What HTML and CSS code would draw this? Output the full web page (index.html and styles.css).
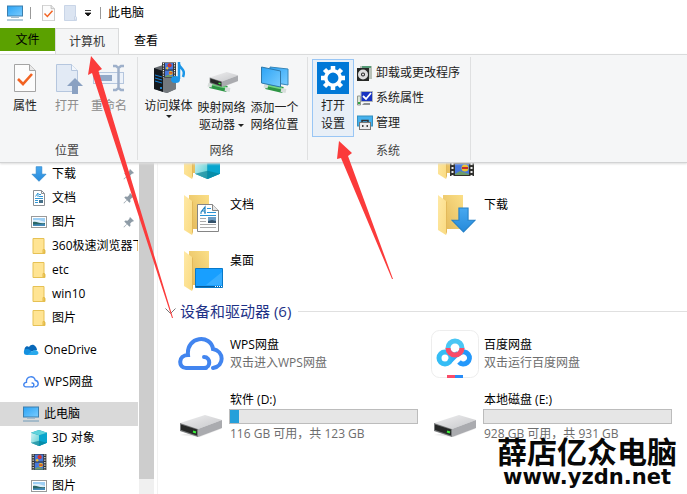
FILE: index.html
```html
<!DOCTYPE html>
<html lang="zh-CN">
<head>
<meta charset="utf-8">
<title>此电脑</title>
<link rel="stylesheet" href="styles.css">
</head>
<body>
<svg class="defs" aria-hidden="true">
  <defs>
    <linearGradient id="g-screen" x1="0" y1="0" x2="1" y2="1"><stop offset="0" stop-color="#2ba3f5"/><stop offset="1" stop-color="#79ccff"/></linearGradient>
    <linearGradient id="g-back" x1="0" y1="1" x2="1" y2="0"><stop offset="0" stop-color="#e3b95a"/><stop offset="1" stop-color="#fbdf87"/></linearGradient>
    <linearGradient id="g-front" x1="0" y1="0" x2="1" y2="1"><stop offset="0" stop-color="#ffe9a6"/><stop offset="1" stop-color="#fadb82"/></linearGradient>
    <linearGradient id="g-down" x1="0" y1="0" x2="0" y2="1"><stop offset="0" stop-color="#47a8f0"/><stop offset="1" stop-color="#268ada"/></linearGradient>
    <linearGradient id="g-metal" x1="0" y1="0" x2="1" y2="1"><stop offset="0" stop-color="#efeff0"/><stop offset="1" stop-color="#c6c7ca"/></linearGradient>
    <linearGradient id="g-cube" x1="0" y1="0" x2="1" y2="1"><stop offset="0" stop-color="#d3f3f4"/><stop offset="1" stop-color="#54ccd2"/></linearGradient>
    <linearGradient id="g-pan" x1="0" y1="0" x2="1" y2="0"><stop offset="0" stop-color="#35bdf5"/><stop offset="1" stop-color="#2398fb"/></linearGradient>
  </defs>
  <symbol id="pc" viewBox="0 0 16 16">
    <rect x=".5" y="1" width="15" height="10" fill="url(#g-screen)" stroke="#3c7fae"/>
    <path d="M4 12.5h8" stroke="#a5bccd"/><path d="M0 15h16" stroke="#6e9ab8"/>
  </symbol>
  <symbol id="check-page" viewBox="0 0 22 28">
    <path d="M.5.5h15l6 6v21H.5z" fill="#fcfcfc" stroke="#a4a4a4"/><path d="M15.500.5v6h6" fill="#e8e8e8" stroke="#a4a4a4"/>
    <path d="M4 15l5 5 9-10" fill="none" stroke="#f26322" stroke-width="2.600"/>
  </symbol>
  <symbol id="folder-s" viewBox="0 0 13 16">
    <path d="M.5.5h11v11l1 1v3H.5z" fill="#ffe493" stroke="#e6c154"/><path d="M10.500 15v-3.500h1.500V15z" fill="#f6d365" stroke="#e3ba49"/>
  </symbol>
  <symbol id="down" viewBox="0 0 16 17">
    <path d="M5 .7h6v8h4.500L8 16.300.5 8.700H5z" fill="url(#g-down)" stroke="#2480c8" stroke-width=".7"/>
  </symbol>
  <symbol id="doc" viewBox="0 0 22 28">
    <path d="M.5.5h15l6 6v21H.5z" fill="#fff" stroke="#858585"/><path d="M15.500.5v6h6" fill="#e6e6e6" stroke="#858585"/>
    <path d="M3 9h2M7 9h2M4 8l4-5v6M5 7h3" fill="none" stroke="#2080be" stroke-width="1.200"/>
    <path d="M10 4.500h4M10 8.500h9M3 11.500h16" stroke="#2a94d6"/><path d="M3 14.500h6M3 17.500h6M3 20.500h16M3 23.500h16" stroke="#aaa"/>
    <path d="M11 13h8v6h-8z" fill="#6d9cc3"/><path d="M11 17l4-1 4 1v2h-8z" fill="#34516a"/>
  </symbol>
  <symbol id="doc-s" viewBox="0 0 12 16">
    <path d="M.5.5h8l3 3v12H.5z" fill="#fff" stroke="#8b8f94"/><path d="M8.500.5v3h3" fill="none" stroke="#8b8f94"/>
    <path d="M2.500 6.500L5 3v4M6 4.500h2M2 8.500h8M6 6.500h4" fill="none" stroke="#3297d4"/><path d="M2 10.500h3M2 12.500h3" stroke="#3297d4"/><path d="M6 10h4v3H6z" fill="#456f88"/>
  </symbol>
  <symbol id="pic" viewBox="0 0 16 12">
    <rect x=".5" y=".5" width="15" height="11" fill="#fff" stroke="#9a9a9a"/><path d="M2 2h12v8H2z" fill="#9ecff4"/>
    <path d="M2 4h6l6 2v1H2z" fill="#deeffb"/><path d="M2 6c4-1 6 2 12 1v3H2z" fill="#2b6766"/><path d="M2 8.500l12-.5v2H2z" fill="#4289b8"/>
  </symbol>
  <symbol id="film" viewBox="0 0 24 26">
    <path d="M0 0h24v26H0z" fill="#30302d"/><path d="M5 1h14v11H5zM5 14h14v11H5z" fill="#4678dd"/>
    <path d="M2.500 1v25M21.500 1v25" stroke="#eee" stroke-width="2" stroke-dasharray="2 2"/>
    <circle cx="13" cy="5" r="3.500" fill="#d3342b"/><circle cx="9" cy="10" r="2" fill="#f2c230"/><circle cx="15" cy="18" r="3.500" fill="#ecc12d"/><path d="M12 18h6" stroke="#c52d29" stroke-width="2"/><path d="M5 24l5-3 9 3v1H5z" fill="#6f9c69"/>
  </symbol>
  <symbol id="cube" viewBox="0 0 24 24">
    <path d="M12 0l12 4v15l-12 5L0 19V4z" fill="#0d8fa8"/><path d="M0 4l12 4v16L0 19z" fill="url(#g-cube)"/><path d="M12 8l12-4v15l-12 5z" fill="#08a5ce"/><path d="M0 4l12-4 12 4-12 4z" fill="#5ed3dc"/><path d="M12 16l12 3-12 5-12-5z" fill="#087f95" opacity=".65"/>
  </symbol>
  <symbol id="pin" viewBox="0 0 12 12">
    <path d="M7 1l4 4-1.500.7-.3-.2-2 2 .3 2.200-1 1L4 8.300 1 11.500.5 11l3.200-3L1.300 5.500l1-1 2.200.3 2-2-.2-.3z" fill="#8e9ba6"/>
  </symbol>
  <symbol id="folder" viewBox="0 0 40 42">
    <path d="M5 1h20v34H5z" fill="url(#g-back)"/><path d="M0 1l8 6v34l-8-5z" fill="url(#g-front)"/><path d="M8 7l1 1v30l-1 3z" fill="#e3b95a"/>
  </symbol>
  <symbol id="wps" viewBox="0 0 46 34">
    <path d="M28 31H8c-8 0-8-13 2-13C8-1 33-3 35 12c11 2 12 17 0 19" fill="none" stroke="#4285ef" stroke-width="4" stroke-linecap="round"/>
    <path d="M26 31c7 0 7-11 0-11" fill="none" stroke="#4285ef" stroke-width="4" stroke-linecap="round"/>
  </symbol>
  <symbol id="drive" viewBox="0 0 44 24">
    <path d="M1 21l20 2 21-8 1-2z" fill="#000" opacity=".08"/><path d="M1 9l25-8 17 5-24 9z" fill="url(#g-metal)"/><path d="M19 15l24-9v8l-24 9z" fill="#aaabaf"/><path d="M1 9l18 6v8L1 17z" fill="#77797b"/><path d="M2 10.500l16 5v6L2 16z" fill="#262827"/><path d="M14 17.500l3 1" stroke="#3bf23b" stroke-width="2"/>
  </symbol>
  <symbol id="network-base" viewBox="0 0 24 9">
    <path d="M3 2l17 4" stroke="#2d9544" stroke-width="6"/><path d="M5 1.500l14 3" stroke="#74d682" stroke-width="2"/><path d="M1 1.500l4 1M18 6l5 1" stroke="#d7dedb" stroke-width="4"/>
  </symbol>
</svg>

<header class="titlebar">
  <svg class="i16"><use href="#pc"/></svg>
  <span class="bar"></span>
  <svg class="quick-page"><use href="#check-page"/></svg>
  <svg class="quick-folder" viewBox="0 0 13 16"><path d="M.5.5h11v11l1 1v3H.5z" fill="#dce5f2" stroke="#c9d5e7"/><path d="M10.500 15v-3.500h1.500V15z" fill="#fff" stroke="#c9d5e7"/></svg>
  <svg class="quick-more" viewBox="0 0 8 8"><path d="M1 1.500h6M1 4h6L4 7z" stroke="#111" stroke-width=".8" fill="#111"/></svg>
  <span class="bar"></span>
  <h1>此电脑</h1>
</header>

<nav class="tabs">
  <button class="tab file">文件</button>
  <button class="tab active">计算机</button>
  <button class="tab">查看</button>
</nav>

<section class="ribbon">
  <div class="group place">
    <div class="tools">
      <button class="tool"><svg class="i32" viewBox="0 0 32 32"><use href="#check-page" x="5" y="2" width="22" height="28"/></svg><span>属性</span></button>
      <button class="tool off"><svg class="i32" viewBox="0 0 32 32"><path d="M5.500 2.500h15l6 6v21h-21z" fill="#e2eaf5" stroke="#b5c6de"/><path d="M20.500 2.500v6h6" fill="#f3f7fc" stroke="#b5c6de"/><path d="M24 16l8 8h-5v8h-6v-8h-5z" fill="#8aa1c2"/></svg><span>打开</span></button>
      <button class="tool off"><svg class="i32" viewBox="0 0 32 32"><rect x=".5" y="10.500" width="30" height="11" fill="#edf2f9" stroke="#b5c6de"/><path d="M6 13h13v6H6z" fill="#93a9c8"/><path d="M20 4h3l2.500 2L28 4h3M25.500 6v20M20 28h3l2.500-2 2.500 2h3" fill="none" stroke="#9eb0ca" stroke-width="2.500"/></svg><span>重命名</span></button>
    </div>
    <h2>位置</h2>
  </div>
  <div class="group network">
    <div class="tools">
      <button class="tool"><svg class="i32" viewBox="0 0 32 32">
        <path d="M1 6l9-3 13 3v21l-9 4-13-4z" fill="#666b70"/><path d="M1 6l9 3v21l-9-3z" fill="#14191e"/><path d="M2 13l7 2M2 16l7 2M2 19l7 2" stroke="#1681d8"/><path d="M10 9l13-3v21l-9 4-4-1z" fill="#74797e"/><circle cx="8" cy="26" r="1" fill="#26a5ff"/>
        <use href="#film" x="9" y="0" width="14" height="16"/>
        <path d="M26 0v17M26 2c1 5 7 5 4 13" fill="none" stroke="#1b96e8" stroke-width="2.500"/><ellipse cx="22.500" cy="17.500" rx="4.500" ry="3.500" fill="#1b96e8"/></svg><span>访问媒体</span><i class="caret"></i></button>
      <button class="tool low"><svg class="i32" viewBox="0 0 32 32"><use href="#network-base" x="1" y="21" width="24" height="9"/><use href="#drive" x="3" y="9" width="30" height="17"/></svg><span>映射网络<br>驱动器 <i class="caret"></i></span></button>
      <button class="tool low"><svg class="i32" viewBox="0 0 32 32"><use href="#network-base" x="4" y="22" width="24" height="9"/><path d="M11 5l18 2v16l-18-3z" fill="url(#g-screen)" stroke="#3686b9"/><path d="M2.500 5l19 4v16l-19-4z" fill="url(#g-screen)" stroke="#2f79aa"/></svg><span>添加一个<br>网络位置</span></button>
    </div>
    <h2>网络</h2>
  </div>
  <div class="group system">
    <div class="tools">
      <button class="tool settings"><svg class="i32" viewBox="0 0 32 32"><path d="M0 0h32v32H0z" fill="#0078d7"/><g stroke="#fff" stroke-width="4.500"><path d="M16 4v24M4 16h24M7.500 7.500l17 17M24.500 7.500l-17 17"/></g><circle cx="16" cy="16" r="7.200" fill="#0078d7" stroke="#fff" stroke-width="3.500"/></svg><span>打开<br>设置</span></button>
      <div class="list">
        <button><svg class="i16" viewBox="0 0 16 16"><path d="M3 1h12v13H3z" fill="#b9c2b9"/><path d="M5 2h9" stroke="#569b77" stroke-width="2"/><path d="M0 3h12v13H0z" fill="#262826"/><circle cx="6" cy="9.500" r="5" fill="#ddd"/><circle cx="6" cy="9.500" r="2" fill="#222"/><circle cx="6" cy="9.500" r="1" fill="#eee"/></svg>卸载或更改程序</button>
        <button><svg class="i16" viewBox="0 0 16 16"><path d="M.5 6h3v9h-3z" fill="#dce6da" stroke="#909790"/><path d="M1 13h2" stroke="#32a644" stroke-width="2"/><path d="M4 1.500h11.500v10H4z" fill="#1933c2" stroke="#afb4b8"/><path d="M6 6l3 3 5-6" fill="none" stroke="#fff" stroke-width="1.800"/><path d="M7 13h6v2H5z" fill="#8b8f92"/></svg>系统属性</button>
        <button><svg class="i16" viewBox="0 0 16 16"><rect x=".5" y="1" width="15" height="10" fill="#45b1ed" stroke="#338fc0"/><path d="M5 7V5.500h6V7" fill="none" stroke="#333" stroke-width="1.500"/><rect x="2.500" y="7.500" width="11" height="7" fill="#eee" stroke="#777"/><path d="M5 10h1.500v2H5zM9.500 10H11v2H9.500z" fill="#444"/></svg>管理</button>
      </div>
    </div>
    <h2>系统</h2>
  </div>
</section>

<main class="body">
  <aside class="tree">
    <ul>
      <li><svg class="i16"><use href="#down"/></svg>下载<svg class="pin"><use href="#pin"/></svg></li>
      <li><svg class="i16"><use href="#doc-s"/></svg>文档<svg class="pin"><use href="#pin"/></svg></li>
      <li><svg class="i16"><use href="#pic"/></svg>图片<svg class="pin"><use href="#pin"/></svg></li>
      <li><svg class="i16"><use href="#folder-s"/></svg>360极速浏览器下</li>
      <li><svg class="i16"><use href="#folder-s"/></svg>etc</li>
      <li><svg class="i16"><use href="#folder-s"/></svg>win10</li>
      <li><svg class="i16"><use href="#folder-s"/></svg>图片</li>
      <li class="root"><svg class="i16" viewBox="0 0 16 16"><path d="M2 11C0 5 4 3 6 5c3-5 8-1 8 3z" fill="#0868b9"/><path d="M1 11c-1-4 4-5 6-3l5 5H4c-2 0-3-1-3-2z" fill="#1490df"/><path d="M4 13l7-5c5 0 6 5 2 5z" fill="#29a9ec"/></svg>OneDrive</li>
      <li class="root"><svg class="i16"><use href="#wps"/></svg>WPS网盘</li>
      <li class="root selected"><svg class="i16"><use href="#pc"/></svg>此电脑</li>
      <li><svg class="i16"><use href="#cube"/></svg>3D 对象</li>
      <li><svg class="i16"><use href="#film"/></svg>视频</li>
      <li><svg class="i16"><use href="#pic"/></svg>图片</li>
    </ul>
  </aside>
  <div class="scroll"><div class="thumb"></div></div>
  <section class="content">
    <div class="grid folders">
      <article class="folder"><svg class="fi" viewBox="0 0 40 42"><use href="#folder" width="40" height="42"/><use href="#cube" x="11" y="16" width="25" height="25"/></svg></article>
      <article class="folder"><svg class="fi" viewBox="0 0 40 42"><use href="#folder" width="40" height="42"/><use href="#film" x="12" y="12" width="24" height="26"/></svg></article>
      <article class="folder"><svg class="fi" viewBox="0 0 40 42"><use href="#folder" width="40" height="42"/><use href="#doc" x="13" y="10" width="22" height="28"/></svg><span>文档</span></article>
      <article class="folder"><svg class="fi" viewBox="0 0 40 42"><use href="#folder" width="40" height="42"/><use href="#down" x="13" y="13" width="25" height="26"/></svg><span>下载</span></article>
      <article class="folder"><svg class="fi" viewBox="0 0 40 42"><use href="#folder" width="40" height="42"/><path d="M11.500 18.500h27v19h-27z" fill="#189fff" stroke="#0879c9"/><path d="M38 22v13H22z" fill="#4cb7ff" opacity=".6"/><path d="M12 36.500h26" stroke="#075c9b"/><path d="M31 36.500h7" stroke="#fff" stroke-dasharray="1 1"/></svg><span>桌面</span></article>
    </div>
    <h2 class="section"><svg class="chev" viewBox="0 0 11 7"><path d="M.5.5l5 5 5-5" fill="none" stroke="#777"/></svg><span>设备和驱动器 (6)</span></h2>
    <div class="grid drives">
      <article class="item"><svg class="di wpsicon"><use href="#wps"/></svg><div><h3>WPS网盘</h3><p>双击进入WPS网盘</p></div></article>
      <article class="item"><svg class="di" viewBox="0 0 48 48"><rect x=".5" y=".5" width="47" height="47" rx="8" fill="#fff" stroke="#ededed"/><g fill="none" stroke-width="5"><circle cx="14" cy="28" r="6" stroke="#35bdf5"/><path d="M28 32a6 6 0 1 0 1-9" stroke="#2398fb"/><path d="M18 32l9-9" stroke="url(#g-pan)"/><circle cx="24" cy="18" r="7" stroke="#4ac6f4"/><path d="M17 18a7 7 0 0 0 14 0" stroke="#fa4b68"/></g><path d="M16 45h8v3h-8z" fill="#fa4b68"/><path d="M24 45h8v3h-8z" fill="#288cf7"/></svg><div><h3>百度网盘</h3><p>双击运行百度网盘</p></div></article>
      <article class="item disk"><svg class="di diskicon"><use href="#drive"/></svg><div><h3 id="d">软件 (D:)</h3><div class="usage" role="img" aria-labelledby="d"><i class="used"></i></div><p>116 GB 可用，共 123 GB</p></div></article>
      <article class="item disk"><svg class="di diskicon"><use href="#drive"/></svg><div><h3 id="e">本地磁盘 (E:)</h3><div class="usage" role="img" aria-labelledby="e"></div><p>928 GB 可用，共 931 GB</p></div></article>
    </div>
  </section>
</main>

<svg class="arrows" viewBox="0 0 687 494" aria-hidden="true">
  <path d="M91 56l11 13-3.500 2L173 318h-1L92 73l-4 2z" fill="#fb3b3b"/>
  <path d="M339 141l13 12-4 3 45 123h-1l-51-121-4 1z" fill="#fb3b3b"/>
</svg>
<div class="mark"><strong>薛店亿众电脑</strong><span>www.yzdn.net</span></div>
</body>
</html>
```
FILE: styles.css
```css
* { box-sizing: border-box; margin: 0; padding: 0; }
body {
  display: flex; flex-direction: column; height: 100vh; overflow: hidden; position: relative;
  background: #fff; color: #000;
  font: 12px/18px "Open Sans", "Noto Sans CJK SC", sans-serif;
}
button { border: 0; background: none; color: inherit; font: inherit; }
h1, h2, h3 { font-size: 12px; font-weight: 400; }
svg { display: block; flex: none; }
ul { list-style: none; }
.defs { position: absolute; width: 0; height: 0; }
.i16 { width: 16px; height: 16px; }
.i32 { width: 32px; height: 32px; }

.titlebar { display: flex; align-items: center; height: 26px; padding: 0 7px; margin-bottom: 2px; flex: none; }
.bar { width: 1px; height: 12px; background: #999; margin: 0 7px; }
.quick-page { width: 13px; height: 16px; margin-left: 4px; }
.quick-folder { width: 13px; height: 16px; margin-left: 9px; }
.quick-more { width: 8px; height: 8px; margin: 0 1px 0 7px; }

.tabs { display: flex; height: 26px; flex: none; }
.tab { padding: 0 15px; height: 26px; }
.tab.file { width: 55px; height: 23px; background: #5ba100; }
.tab.active { width: 64px; padding: 0; border: 1px solid #dadbdc; border-bottom: 0; background: #f5f6f7; color: #333; }

.ribbon { display: flex; flex: none; height: 109px; padding: 2px 0; background: #f5f6f7; border-top: 1px solid #dadbdc; border-bottom: 1px solid #d2d3d4; box-shadow: 0 1px 2px #ddd; position: relative; color: #222; }
.group { display: flex; flex-direction: column; justify-content: space-between; border-right: 1px solid #dfe0e1; padding-top: 2px; }
.group h2 { text-align: center; color: #444; line-height: 18px; }
.tools { display: flex; }
.place { width: 138px; padding-left: 4px; padding-right: 7px; }
.network { width: 170px; padding-left: 4px; padding-right: 6px; }
.system { width: 163px; padding-left: 4px; padding-right: 6px; }
.tool { display: flex; flex-direction: column; align-items: center; width: 42px; padding-top: 3px; white-space: nowrap; }
.tool span { margin-top: 3px; line-height: 18px; }
.tool.low span { margin-top: 5px; line-height: 17px; }
.network .tool { width: 53px; }
.off { color: #8b8b8b; }
.caret { display: inline-block; border: 3px solid transparent; border-top-color: #222; border-bottom: 0; vertical-align: 2px; }
.settings { height: 78px; padding-top: 2px; border: 1px solid #99c6f5; background: #e8eff7; }
.list { display: flex; flex-direction: column; gap: 7px; margin: 5px 0 0 3px; }
.list button { display: flex; align-items: center; gap: 3px; height: 18px; white-space: nowrap; }

.body { display: flex; flex: 1; min-height: 0; }
.tree { width: 138px; overflow: hidden; flex: none; }
.tree ul { margin-top: -1px; }
.tree li { display: flex; align-items: center; gap: 5px; height: 24px; padding-left: 31px; white-space: nowrap; }
.tree li.root { margin: 8px 0; padding-left: 23px; }
.tree li.selected { background: #d9d9d9; margin-bottom: 0; }
.pin { width: 12px; height: 12px; margin-left: auto; margin-right: 3px; }
.scroll { width: 15px; margin: 0 3px 0 1px; background: #f0f0f0; flex: none; padding-bottom: 15px; }
.thumb { height: 100%; background: #cdcdcd; }

.content { flex: 1; min-width: 0; border-left: 1px solid #f2f2f2; overflow: hidden; }
.grid { display: grid; grid-template-columns: 254px 254px; }
.folders { padding-left: 26px; margin-top: -25px; grid-template-rows: 56px 56px 49px; }
.folder { display: flex; gap: 6px; }
.folder span { margin-top: 2px; }
.fi { width: 40px; height: 42px; }
.section { display: flex; align-items: center; height: 22px; margin-top: 1px; padding-left: 7px; color: #1e3287; font-size: 15px; line-height: 22px; white-space: nowrap; }
.section::after { content: ""; flex: 1; height: 1px; margin-left: 7px; background: #e0e0e0; }
.chev { width: 11px; height: 7px; margin-right: 4px; }
.drives { padding: 8px 0 0 19px; row-gap: 13px; }
.item { display: flex; gap: 4px; height: 48px; }
.di { width: 48px; height: 48px; }
.wpsicon { padding: 0 1px; }
.item h3, .item p { padding-left: 1px; }
.item p { color: #6d6d6d; }
.item > div { flex: 1; padding-top: 6px; }
.disk > div { padding-top: 0; }
.diskicon { width: 44px; height: 24px; margin: 23px 2px 0; }
.usage { width: 189px; height: 15px; border: 1px solid #bcbcbc; background: #e6e6e6; }
.used { display: block; width: 5%; height: 100%; background: #26a0da; }
.disk p { margin-top: 1px; }

.arrows { position: absolute; left: 0; top: 0; width: 687px; height: 494px; pointer-events: none; }
.mark { position: absolute; right: 10px; bottom: 5px; display: flex; flex-direction: column; align-items: center; color: #080808; }
.mark strong { font: 700 30px/30px "Noto Sans CJK SC", sans-serif; }
.mark span { font: 700 21px/24px "DejaVu Sans", sans-serif; }
```
